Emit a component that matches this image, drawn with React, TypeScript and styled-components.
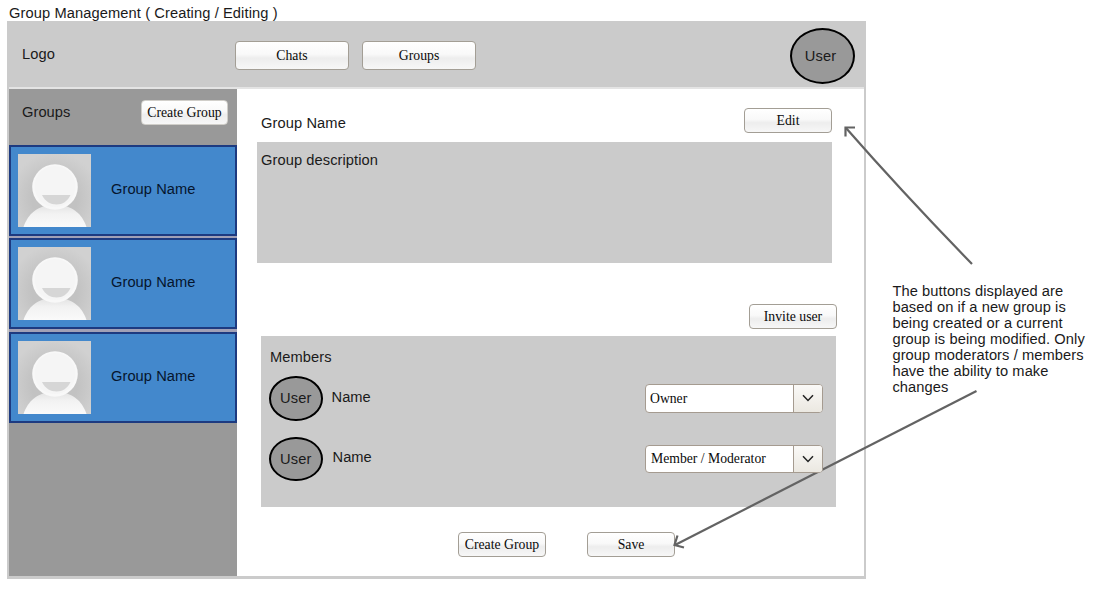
import React from "react";
import styled, { createGlobalStyle } from "styled-components";

const GlobalStyle = createGlobalStyle`
  * { box-sizing: border-box; }
  body { margin: 0; background: #fff; overflow: hidden; }
`;

const Page = styled.div`
  position: relative;
  width: 1093px;
  height: 598px;
  padding: 5px 0 0 7px;
  color: #1a1a1a;
  font: 14.67px/16px "Liberation Sans", Arial, sans-serif;
`;

const Label = styled.span<{ $track?: number }>`
  display: block;
  white-space: nowrap;
  letter-spacing: ${(p) => p.$track ?? 0.06}px;
`;

const Title = styled.h1`
  margin: 0 0 0 2px;
  height: 16px;
  font: inherit;
`;

const Columns = styled.div`
  display: flex;
  align-items: flex-start;
`;

const Frame = styled.section`
  width: 859px;
  height: 558px;
  border: 2px solid #cbcbcb;
  border-bottom-width: 3px;
`;

const Header = styled.header`
  display: flex;
  height: 66px;
  padding: 0 9px 0 13px;
  background: #cbcbcb;
  border-bottom: 2px solid #e4e4e4;
`;

const Logo = styled.div`
  width: 213px;
  padding-top: 23px;
`;

const Nav = styled.nav`
  display: flex;
  gap: 13px;
  flex: 1;
  padding-top: 18px;
`;

const Button = styled.button<{ $w: number; $h?: number; $soft?: boolean; $drop?: number }>`
  width: ${(p) => p.$w}px;
  height: ${(p) => p.$h ?? 25}px;
  padding: ${(p) => p.$drop ?? 0}px 0 0;
  border: 1px solid ${(p) => (p.$soft ? "#d0cec9" : "#a39e95")};
  border-radius: 4px;
  background: linear-gradient(#fff 0%, #f9f9f9 45%, #ededed 60%, #f7f7f7 100%);
  color: #0a0a0a;
  font: 13.75px/16px "Liberation Serif", "Times New Roman", serif;
  white-space: nowrap;
`;

const Avatar = styled.div<{ $w: number; $h: number }>`
  display: flex;
  align-items: center;
  justify-content: center;
  width: ${(p) => p.$w}px;
  height: ${(p) => p.$h}px;
  border: 2px solid #000;
  border-radius: 50%;
  background: #999;
`;

const HeaderAvatar = styled(Avatar)`
  margin-top: 5px;
  padding-right: 4px;
`;

const Body = styled.div`
  display: flex;
  height: 487px;
`;

const Sidebar = styled.aside`
  width: 228px;
  background: #999;
`;

const SidebarHead = styled.div`
  display: flex;
  justify-content: space-between;
  height: 55.5px;
  padding: 11px 9px 0 13px;
`;

const SidebarTitle = styled.div`
  padding-top: 4px;
`;

const GroupList = styled.div`
  display: flex;
  flex-direction: column;
  gap: 2.5px;
  background: #a0a0b6;
`;

const GroupCard = styled.div`
  display: flex;
  align-items: center;
  gap: 20px;
  height: 91px;
  padding-left: 7px;
  border: 2px solid #1d3a80;
  background: #4388cc;
  color: #06152c;
`;

const GroupCardName = styled.div`
  padding-bottom: 3px;
`;

const Main = styled.main`
  flex: 1;
  padding: 19px 0 0 20px;
`;

const NameRow = styled.div`
  display: flex;
  justify-content: space-between;
  width: 575px;
  height: 34px;
  padding-left: 4px;
`;

const NameText = styled.div`
  padding-top: 7px;
`;

const Description = styled.div`
  width: 575px;
  height: 121px;
  padding: 10px 4px;
  background: #cbcbcb;
`;

const InviteRow = styled.div`
  display: flex;
  justify-content: flex-end;
  width: 580px;
  padding: 41px 0 7px;
`;

const Members = styled.div`
  width: 574.5px;
  height: 171px;
  margin-left: 4px;
  padding: 13px 12.5px 0 8px;
  background: #cbcbcb;
`;

const MembersTitle = styled.div`
  height: 27px;
  padding-left: 1px;
`;

const MemberRow = styled.div`
  display: flex;
  height: 60.5px;
`;

const MemberName = styled.div<{ $left: number; $top: number }>`
  flex: 1;
  padding: ${(p) => p.$top}px 0 0 ${(p) => p.$left}px;
`;

const Select = styled.div`
  position: relative;
  z-index: 2;
  display: flex;
  width: 178px;
  height: 28.5px;
  margin-top: 8px;
  border: 1px solid #a59b90;
  border-radius: 4px;
  background: #fff;
  overflow: hidden;
  color: #0a0a0a;
  font: 13.7px/16px "Liberation Serif", "Times New Roman", serif;
`;

const SelectValue = styled.div<{ $left: number }>`
  flex: 1;
  padding: 5.5px 0 0 ${(p) => p.$left}px;
`;

const SelectArrow = styled.div`
  display: flex;
  align-items: center;
  justify-content: center;
  width: 29px;
  border-left: 1px solid #a59b90;
  background: linear-gradient(#faf9f7, #ebe8e1);
`;

const Footer = styled.div`
  display: flex;
  gap: 41px;
  padding: 25px 0 0 201px;
`;

const Note = styled.p`
  width: 196px;
  margin: 262px 0 0 26.4px;
  white-space: nowrap;
`;

const Arrows = styled.svg`
  position: absolute;
  inset: 0;
  z-index: 1;
  pointer-events: none;
`;

const Portrait = ({ id }: { id: string }) => (
  <svg width="73" height="73" viewBox="0 0 73 73">
    <defs>
      <radialGradient id={`${id}-bg`} cx="50%" cy="60%" r="62%">
        <stop offset="0.5" stopColor="#c2c2c2" />
        <stop offset="1" stopColor="#d1d1d1" />
      </radialGradient>
      <linearGradient id={`${id}-body`} x1="0" y1="0" x2="0" y2="1">
        <stop offset="0" stopColor="#e2e2e2" />
        <stop offset="0.4" stopColor="#f2f2f2" />
        <stop offset="1" stopColor="#fafafa" />
      </linearGradient>
    </defs>
    <rect width="73" height="73" fill={`url(#${id}-bg)`} />
    <path d="M5.500 73C10 60 19 51 37 51S64 60 68.500 73Z" fill={`url(#${id}-body)`} />
    <circle cx="37" cy="33" r="22.8" fill="#f8f8f8" />
    <circle cx="37" cy="32.5" r="20.5" fill="#f5f5f5" />
    <path d="M24 41H52.500C49.500 47.500 44.500 50.500 38.500 50.500S27 47.500 24 41Z" fill="#d6d6d6" />
  </svg>
);

const Dropdown = ({ value, left, track }: { value: string; left: number; track: number }) => (
  <Select>
    <SelectValue $left={left}><Label $track={track}>{value}</Label></SelectValue>
    <SelectArrow>
      <svg width="12" height="8" viewBox="0 0 12 8" fill="none" stroke="#222" strokeWidth="1.5">
        <path d="M1 1.200L6 6.400L11 1.200" />
      </svg>
    </SelectArrow>
  </Select>
);

const noteLines = [
  "The buttons displayed are",
  "based on if a new group is",
  "being created or a current",
  "group is being modified. Only",
  "group moderators / members",
  "have the ability to make",
  "changes",
];

export default function App() {
  return (
    <>
      <GlobalStyle />
      <Page>
        <Title><Label $track={0.1}>Group Management ( Creating / Editing )</Label></Title>
        <Columns>
          <Frame>
            <Header>
              <Logo><Label>Logo</Label></Logo>
              <Nav>
                <Button $w={114} $h={29}>Chats</Button>
                <Button $w={114} $h={29}>Groups</Button>
              </Nav>
              <HeaderAvatar $w={65} $h={56}><Label $track={0.1}>User</Label></HeaderAvatar>
            </Header>
            <Body>
              <Sidebar>
                <SidebarHead>
                  <SidebarTitle><Label>Groups</Label></SidebarTitle>
                  <Button $w={87} $h={25} $drop={1} $soft>Create Group</Button>
                </SidebarHead>
                <GroupList>
                  {["a", "b", "c"].map((id) => (
                    <GroupCard key={id}>
                      <Portrait id={id} />
                      <GroupCardName><Label>Group Name</Label></GroupCardName>
                    </GroupCard>
                  ))}
                </GroupList>
              </Sidebar>
              <Main>
                <NameRow>
                  <NameText><Label $track={0.1}>Group Name</Label></NameText>
                  <Button $w={88}>Edit</Button>
                </NameRow>
                <Description><Label $track={0.08}>Group description</Label></Description>
                <InviteRow><Button $w={88}>Invite user</Button></InviteRow>
                <Members>
                  <MembersTitle><Label $track={0.1}>Members</Label></MembersTitle>
                  <MemberRow>
                    <Avatar $w={53.5} $h={44.5}><Label $track={0.1}>User</Label></Avatar>
                    <MemberName $left={9} $top={13}><Label>Name</Label></MemberName>
                    <Dropdown value="Owner" left={4} track={0} />
                  </MemberRow>
                  <MemberRow>
                    <Avatar $w={53.5} $h={44.5}><Label $track={0.1}>User</Label></Avatar>
                    <MemberName $left={10} $top={12}><Label>Name</Label></MemberName>
                    <Dropdown value="Member / Moderator" left={5} track={0} />
                  </MemberRow>
                </Members>
                <Footer>
                  <Button $w={88}>Create Group</Button>
                  <Button $w={88}>Save</Button>
                </Footer>
              </Main>
            </Body>
          </Frame>
          <Note>
            {noteLines.map((line) => (
              <Label key={line} $track={0.09}>{line}</Label>
            ))}
          </Note>
        </Columns>
        <Arrows width="1093" height="598" fill="none" stroke="#636363" strokeWidth="2.2">
          <path d="M972 264Q903 193 846 128" />
          <path d="M855 127.500H845.500V136.500" />
          <path d="M976.500 391L675 545" />
          <path d="M677.500 535.500L674.500 545L684 547.500" />
        </Arrows>
      </Page>
    </>
  );
}
